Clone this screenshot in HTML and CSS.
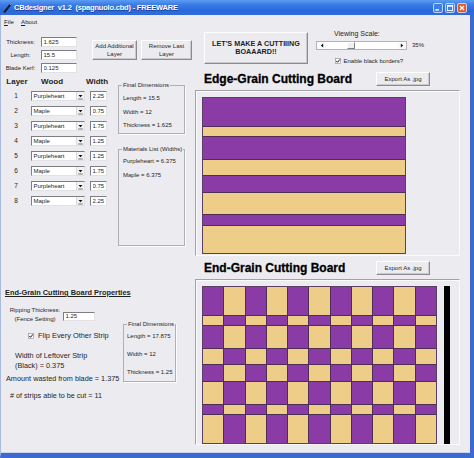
FILE: index.html
```html
<!DOCTYPE html>
<html>
<head>
<meta charset="utf-8">
<title>CBdesigner</title>
<link rel="stylesheet" href="styles.css">
</head>
<body>
<div class="window">
  <div class="titlebar">
    <svg class="app-icon" width="9" height="10" viewBox="0 0 9 10"><path d="M1.6 8.8 L7.2 1.8" stroke="#15182a" stroke-width="2" stroke-linecap="round"/><path d="M7 2 L8.2 0.7" stroke="#9fb4da" stroke-width="1"/></svg>
    <span class="title">CBdesigner&nbsp; v1.2&nbsp; (spagnuolo.cbd) - FREEWARE</span>
    <div class="caption">
      <svg width="10" height="10" viewBox="0 0 10 10"><rect x=".5" y=".5" width="9" height="9" rx="1.5" fill="#3d7ee8" stroke="#dfe8fb" stroke-width=".8"/><rect x="2.3" y="6.2" width="3.6" height="1.4" fill="#fff"/></svg>
      <svg width="10" height="10" viewBox="0 0 10 10"><rect x=".5" y=".5" width="9" height="9" rx="1.5" fill="#3d7ee8" stroke="#dfe8fb" stroke-width=".8"/><rect x="2.4" y="2.4" width="5.2" height="5.2" fill="none" stroke="#fff" stroke-width=".9"/><rect x="2.4" y="2.4" width="5.2" height="1.3" fill="#fff"/></svg>
      <svg width="10" height="10" viewBox="0 0 10 10"><rect x=".5" y=".5" width="9" height="9" rx="1.5" fill="#e05a2c" stroke="#fbe2d8" stroke-width=".8"/><path d="M3 3 L7 7 M7 3 L3 7" stroke="#fff" stroke-width="1.3"/></svg>
    </div>
  </div>
  <div class="frame">
    <div class="menubar"><span><u>F</u>ile</span><span><u>A</u>bout</span></div>
    <div class="client">
      <div class="left">
        <div class="params-row">
          <div class="params">
            <span class="plabel">Thickness:</span><input class="field" value="1.625">
            <span class="plabel">Length:</span><input class="field" value="15.5">
            <span class="plabel">Blade Kerf:</span><input class="field" value="0.125">
          </div>
          <div class="layer-btns">
            <div class="btn add">Add Additional<br>Layer</div>
            <div class="btn remove">Remove Last<br>Layer</div>
          </div>
        </div>

        <div class="layers">
          <div class="layer-grid">
            <div class="lh lh-layer">Layer</div><div class="lh lh-wood">Wood</div><div class="lh lh-width">Width</div>

            <div class="num">1</div><div class="combo"><span class="combo-text">Purpleheart</span><span class="combo-btn"><svg width="7" height="8" viewBox="0 0 7 8"><path d="M1.5 3 H5.5 L3.5 5.2 Z" fill="#111"/><path d="M1.2 7 H5.8" stroke="#444" stroke-width=".7"/></svg></span></div><input class="field winput" value="2.25">
            <div class="num">2</div><div class="combo"><span class="combo-text">Maple</span><span class="combo-btn"><svg width="7" height="8" viewBox="0 0 7 8"><path d="M1.5 3 H5.5 L3.5 5.2 Z" fill="#111"/><path d="M1.2 7 H5.8" stroke="#444" stroke-width=".7"/></svg></span></div><input class="field winput" value="0.75">
            <div class="num">3</div><div class="combo"><span class="combo-text">Purpleheart</span><span class="combo-btn"><svg width="7" height="8" viewBox="0 0 7 8"><path d="M1.5 3 H5.5 L3.5 5.2 Z" fill="#111"/><path d="M1.2 7 H5.8" stroke="#444" stroke-width=".7"/></svg></span></div><input class="field winput" value="1.75">
            <div class="num">4</div><div class="combo"><span class="combo-text">Maple</span><span class="combo-btn"><svg width="7" height="8" viewBox="0 0 7 8"><path d="M1.5 3 H5.5 L3.5 5.2 Z" fill="#111"/><path d="M1.2 7 H5.8" stroke="#444" stroke-width=".7"/></svg></span></div><input class="field winput" value="1.25">
            <div class="num">5</div><div class="combo"><span class="combo-text">Purpleheart</span><span class="combo-btn"><svg width="7" height="8" viewBox="0 0 7 8"><path d="M1.5 3 H5.5 L3.5 5.2 Z" fill="#111"/><path d="M1.2 7 H5.8" stroke="#444" stroke-width=".7"/></svg></span></div><input class="field winput" value="1.25">
            <div class="num">6</div><div class="combo"><span class="combo-text">Maple</span><span class="combo-btn"><svg width="7" height="8" viewBox="0 0 7 8"><path d="M1.5 3 H5.5 L3.5 5.2 Z" fill="#111"/><path d="M1.2 7 H5.8" stroke="#444" stroke-width=".7"/></svg></span></div><input class="field winput" value="1.75">
            <div class="num">7</div><div class="combo"><span class="combo-text">Purpleheart</span><span class="combo-btn"><svg width="7" height="8" viewBox="0 0 7 8"><path d="M1.5 3 H5.5 L3.5 5.2 Z" fill="#111"/><path d="M1.2 7 H5.8" stroke="#444" stroke-width=".7"/></svg></span></div><input class="field winput" value="0.75">
            <div class="num">8</div><div class="combo"><span class="combo-text">Maple</span><span class="combo-btn"><svg width="7" height="8" viewBox="0 0 7 8"><path d="M1.5 3 H5.5 L3.5 5.2 Z" fill="#111"/><path d="M1.2 7 H5.8" stroke="#444" stroke-width=".7"/></svg></span></div><input class="field winput" value="2.25">
          </div>

          <div class="groups">
            <div class="group dims">
              <span class="legend">Final Dimensions</span>
              <div>Length = 15.5</div>
              <div>Width = 12</div>
              <div>Thickness = 1.625</div>
            </div>
            <div class="group mats">
              <span class="legend">Materials List (Widths)</span>
              <div>Purpleheart = 6.375</div>
              <div>Maple = 6.375</div>
            </div>
          </div>
        </div>

        <div class="eg-title">End-Grain Cutting Board Properties</div>
        <div class="eg-body">
          <div class="eg-controls">
            <div class="rip-row">
              <div class="rip-label">Ripping Thickness:<br>(Fence Setting)</div>
              <input class="field rip-input" value="1.25">
            </div>
            <div class="flip-row">
              <svg class="chk" width="6" height="6" viewBox="0 0 6 6"><rect x=".5" y=".5" width="5" height="5" fill="#fff" stroke="#8a8a8e" stroke-width=".6"/><path d="M1.2 2.9 L2.5 4.3 L4.9 1.4" fill="none" stroke="#111" stroke-width="1"/></svg>
              <span class="flip-text">Flip Every Other Strip</span>
            </div>
            <div class="leftover">Width of Leftover Strip<br>(Black) = 0.375</div>
            <div class="wasted">Amount wasted from blade = 1.375</div>
            <div class="strips"># of strips able to be cut = 11</div>
          </div>
          <div class="group eg-dims">
            <span class="legend">Final Dimensions</span>
            <div>Length = 17.875</div>
            <div>Width = 12</div>
            <div>Thickness = 1.25</div>
          </div>
        </div>
      </div>

      <div class="right">
        <div class="top-row">
          <div class="btn big-btn">LET'S MAKE A CUTTIIING<br>BOAAARD!!</div>
          <div class="scale">
            <div class="scale-label">Viewing Scale:</div>
            <div class="slider-row">
              <div class="slider">
                <span class="sbtn"><svg width="4" height="5" viewBox="0 0 4 5"><path d="M3.2 0.5 V4.5 L0.8 2.5 Z" fill="#111"/></svg></span>
                <span class="track"><span class="thumb"></span></span>
                <span class="sbtn"><svg width="4" height="5" viewBox="0 0 4 5"><path d="M0.8 0.5 V4.5 L3.2 2.5 Z" fill="#111"/></svg></span>
              </div>
              <span class="pct">35%</span>
            </div>
            <div class="check-row">
              <svg class="chk" width="6" height="6" viewBox="0 0 6 6"><rect x=".5" y=".5" width="5" height="5" fill="#fff" stroke="#8a8a8e" stroke-width=".6"/><path d="M1.2 2.9 L2.5 4.3 L4.9 1.4" fill="none" stroke="#111" stroke-width="1"/></svg>
              <span class="check-text">Enable black borders?</span>
            </div>
          </div>
        </div>

        <div class="section-head head1">
          <h2 class="board-title">Edge-Grain Cutting Board</h2>
          <div class="btn export">Export As .jpg</div>
        </div>
        <div class="board-frame">
          <div class="edge-board">
            <div class="st p s225"></div>
            <div class="st m s075"></div>
            <div class="st p s175"></div>
            <div class="st m s125"></div>
            <div class="st p s125"></div>
            <div class="st m s175"></div>
            <div class="st p s075"></div>
            <div class="st m s225"></div>
          </div>
        </div>

        <div class="section-head head2">
          <h2 class="board-title">End-Grain Cutting Board</h2>
          <div class="btn export">Export As .jpg</div>
        </div>
        <div class="board-frame frame2">
          <div class="end-board">
            <div class="col"><div class="st p s225"></div><div class="st m s075"></div><div class="st p s175"></div><div class="st m s125"></div><div class="st p s125"></div><div class="st m s175"></div><div class="st p s075"></div><div class="st m s225"></div></div>
            <div class="col"><div class="st m s225"></div><div class="st p s075"></div><div class="st m s175"></div><div class="st p s125"></div><div class="st m s125"></div><div class="st p s175"></div><div class="st m s075"></div><div class="st p s225"></div></div>
            <div class="col"><div class="st p s225"></div><div class="st m s075"></div><div class="st p s175"></div><div class="st m s125"></div><div class="st p s125"></div><div class="st m s175"></div><div class="st p s075"></div><div class="st m s225"></div></div>
            <div class="col"><div class="st m s225"></div><div class="st p s075"></div><div class="st m s175"></div><div class="st p s125"></div><div class="st m s125"></div><div class="st p s175"></div><div class="st m s075"></div><div class="st p s225"></div></div>
            <div class="col"><div class="st p s225"></div><div class="st m s075"></div><div class="st p s175"></div><div class="st m s125"></div><div class="st p s125"></div><div class="st m s175"></div><div class="st p s075"></div><div class="st m s225"></div></div>
            <div class="col"><div class="st m s225"></div><div class="st p s075"></div><div class="st m s175"></div><div class="st p s125"></div><div class="st m s125"></div><div class="st p s175"></div><div class="st m s075"></div><div class="st p s225"></div></div>
            <div class="col"><div class="st p s225"></div><div class="st m s075"></div><div class="st p s175"></div><div class="st m s125"></div><div class="st p s125"></div><div class="st m s175"></div><div class="st p s075"></div><div class="st m s225"></div></div>
            <div class="col"><div class="st m s225"></div><div class="st p s075"></div><div class="st m s175"></div><div class="st p s125"></div><div class="st m s125"></div><div class="st p s175"></div><div class="st m s075"></div><div class="st p s225"></div></div>
            <div class="col"><div class="st p s225"></div><div class="st m s075"></div><div class="st p s175"></div><div class="st m s125"></div><div class="st p s125"></div><div class="st m s175"></div><div class="st p s075"></div><div class="st m s225"></div></div>
            <div class="col"><div class="st m s225"></div><div class="st p s075"></div><div class="st m s175"></div><div class="st p s125"></div><div class="st m s125"></div><div class="st p s175"></div><div class="st m s075"></div><div class="st p s225"></div></div>
            <div class="col"><div class="st p s225"></div><div class="st m s075"></div><div class="st p s175"></div><div class="st m s125"></div><div class="st p s125"></div><div class="st m s175"></div><div class="st p s075"></div><div class="st m s225"></div></div>
          </div>
          <div class="leftover-strip"></div>
        </div>
      </div>
    </div>
  </div>
</div>
</body>
</html>
```

FILE: styles.css
```css
* { box-sizing: border-box; }
html, body { margin: 0; padding: 0; }
body {
  width: 474px;
  height: 458px;
  overflow: hidden;
  background: #ececf0;
  font-family: "Liberation Sans", Arial, sans-serif;
  color: #1e1e1e;
}
.window { width: 474px; height: 458px; display: flex; flex-direction: column; }

/* title bar */
.titlebar {
  flex: none;
  height: 15px;
  display: flex;
  align-items: center;
  padding: 0 7px 0 3px;
  background: linear-gradient(#5d9cf1 0%, #3b7de7 30%, #2b68dc 70%, #2f6bd9 100%);
}
.app-icon { flex: none; margin-right: 2px; }
.title {
  flex: 1;
  color: #fff;
  font-size: 7.5px;
  font-weight: bold;
  letter-spacing: -0.2px;
  white-space: pre;
  text-shadow: 0.5px 0.5px 0 #1b3f98;
}
.caption { display: flex; gap: 2px; }
.caption svg { display: block; }

.frame {
  flex: 1;
  display: flex;
  flex-direction: column;
  padding-left: 1px;
  border-style: solid;
  border-color: #3c6ad0;
  border-left-color: #a9badf;
  border-width: 0 4px 5px 1px;
  box-shadow: inset 0 -1px 0 #c9d4ee;
}
.menubar {
  flex: none;
  height: 12px;
  display: flex;
  align-items: center;
  gap: 7px;
  padding-left: 2px;
  font-size: 6.2px;
}
.client { flex: 1; display: flex; }
.left { width: 193px; flex: none; display: flex; flex-direction: column; }
.right { flex: 1; display: flex; flex-direction: column; }

/* controls */
.field {
  display: block;
  width: 100%;
  height: 10px;
  margin: 0;
  padding: 0 1.5px;
  font: 6px "Liberation Sans", Arial, sans-serif;
  color: #1e1e1e;
  background: #fff;
  border: 1px solid;
  border-color: #7d7d82 #e2e2e6 #e2e2e6 #7d7d82;
  outline: none;
}
.btn {
  display: flex;
  align-items: center;
  justify-content: center;
  text-align: center;
  background: #ececf0;
  border: 1px solid;
  border-color: #ffffff #8c8c90 #8c8c90 #ffffff;
  box-shadow: inset -1px -1px 0 #cacace;
  font-size: 6px;
  line-height: 8px;
}

/* parameters */
.params-row { display: flex; align-items: flex-start; margin-top: 10px; padding-left: 1px; }
.params {
  display: grid;
  grid-template-columns: 35px 36px;
  grid-auto-rows: 10px;
  column-gap: 3px;
  row-gap: 3px;
}
.plabel { font-size: 6px; line-height: 10px; text-align: center; white-space: nowrap; }
.layer-btns { display: flex; gap: 4px; margin: 3px 0 0 15px; }
.add { width: 45px; height: 20px; }
.remove { width: 51px; height: 20px; }

/* layers */
.layers { display: flex; align-items: flex-start; margin-top: 5px; }
.layer-grid {
  display: grid;
  grid-template-columns: 27px 59px 17px;
  grid-template-rows: 8px;
  grid-auto-rows: 10px;
  row-gap: 5px;
  margin-left: 2px;
}
.lh { font-size: 8px; font-weight: bold; line-height: 8px; white-space: nowrap; }
.lh-layer { text-align: center; padding-right: 1px; }
.lh-wood { padding-left: 10px; }
.lh-width { margin-left: -4px; }
.num { font-size: 6.5px; line-height: 10px; text-align: center; padding-right: 3px; }
.combo {
  width: 54px;
  height: 10px;
  display: flex;
  align-items: center;
  background: #fff;
  border: 1px solid;
  border-color: #7d7d82 #e2e2e6 #e2e2e6 #7d7d82;
}
.combo-text { flex: 1; font-size: 6px; line-height: 8px; padding-left: 1.5px; }
.combo-btn {
  width: 8px;
  height: 8px;
  display: flex;
  align-items: center;
  justify-content: center;
  background: #f2f2f4;
  border-left: 1px solid #d8d8dc;
}
.winput { width: 17px; }

.groups { width: 67px; margin-left: 11px; display: flex; flex-direction: column; }
.group {
  position: relative;
  border: 1px solid #b0b0b4;
  box-shadow: 1px 1px 0 #fbfbfd;
  font-size: 6px;
}
.legend {
  position: absolute;
  top: -5px;
  left: 3px;
  padding: 0 1px;
  line-height: 8px;
  background: #ececf0;
  white-space: nowrap;
}
.dims { margin-top: 7px; height: 49px; padding: 6px 0 0 4px; line-height: 13.5px; }
.mats { margin-top: 15px; height: 97px; padding: 4px 0 0 4px; line-height: 14px; }

/* end grain properties */
.eg-title {
  margin-top: 42px;
  padding-left: 3px;
  font-size: 7.4px;
  font-weight: bold;
  line-height: 10px;
  text-decoration: underline;
  white-space: nowrap;
}
.eg-body { display: flex; align-items: flex-start; }
.eg-controls { width: 121px; display: flex; flex-direction: column; white-space: nowrap; }
.rip-row { display: flex; align-items: flex-start; margin-top: 7.5px; }
.rip-label { width: 56px; margin-left: 5px; text-align: center; font-size: 6px; line-height: 9px; }
.rip-input { width: 32px; height: 9px; margin-top: 6px; }
.flip-row { display: flex; align-items: center; height: 8px; margin-top: 8px; padding-left: 26px; }
.chk { display: block; flex: none; }
.flip-text { margin-left: 4px; font-size: 7.4px; line-height: 8px; }
.leftover { margin-top: 11.5px; padding-left: 13px; font-size: 7.3px; line-height: 10px; }
.wasted { margin-top: 2.5px; padding-left: 4px; font-size: 7.3px; line-height: 10px; }
.strips { margin-top: 7.5px; padding-left: 8px; font-size: 7.2px; line-height: 10px; }
.eg-dims { width: 53px; height: 58px; margin-top: 26px; padding: 3px 0 0 3px; line-height: 17.8px; white-space: nowrap; }

/* right side */
.top-row { display: flex; align-items: flex-start; margin-top: 4.5px; }
.big-btn { width: 104px; height: 32px; margin-left: 9px; font-size: 7.2px; font-weight: bold; line-height: 8px; }
.scale { display: flex; flex-direction: column; margin: -1.5px 0 0 8px; }
.scale-label { font-size: 7px; line-height: 8px; padding-left: 18px; }
.slider-row { display: flex; align-items: center; margin-top: 2.7px; height: 9.3px; }
.slider {
  width: 91px;
  height: 9.3px;
  display: flex;
  background: #fff;
  border: 1px solid #b4b4b8;
}
.sbtn { width: 9px; display: flex; align-items: center; justify-content: center; background: #fafafa; }
.track { flex: 1; display: flex; padding-left: 21px; }
.thumb {
  width: 8px;
  background: #f0f0f2;
  border: 1px solid;
  border-color: #fff #7f7f84 #7f7f84 #fff;
}
.pct { font-size: 6px; margin-left: 5px; }
.check-row { display: flex; align-items: center; height: 8px; margin-top: 7.5px; padding-left: 19px; }
.check-text { margin-left: 2.5px; font-size: 6px; }

.section-head { display: flex; align-items: center; height: 14px; }
.head1 { margin-top: 6.5px; }
.head2 { margin-top: 4.5px; }
.board-title {
  margin: 0 0 0 9px;
  font-size: 12px;
  font-weight: bold;
  line-height: 14px;
  color: #000;
  white-space: nowrap;
  -webkit-text-stroke: 0.3px #000;
}
.export { width: 54px; height: 14px; margin: 0 40px 0 auto; }

.board-frame {
  width: 265px;
  height: 166px;
  margin-top: 4.5px;
  padding: 6px 0 0 6px;
  display: flex;
  align-items: flex-start;
  border: 1px solid;
  border-color: #a2a2a6 #fbfbfd #fbfbfd #a2a2a6;
  box-shadow: inset 1px 1px 0 #fbfbfd;
}
.frame2 { margin-top: 4px; }

.edge-board {
  width: 204px;
  height: 157px;
  display: flex;
  flex-direction: column;
  border: 1px solid #5b3f62;
}
.end-board {
  width: 235px;
  height: 158px;
  display: flex;
  border: 1px solid #5b3f62;
}
.col { flex: 1 1 0; display: flex; flex-direction: column; }
.col + .col { border-left: 1px solid #4c2e56; }
.st { flex-basis: 0; min-height: 0; }
.st + .st { border-top: 1px solid #4c2e56; }
.p { background: #8a3ba6; }
.m { background: #edcd88; }
.s225 { flex-grow: 2.25; }
.s175 { flex-grow: 1.75; }
.s125 { flex-grow: 1.25; }
.s075 { flex-grow: 0.75; }
.leftover-strip { width: 6px; height: 158px; margin-left: 7px; background: #000; }
```
